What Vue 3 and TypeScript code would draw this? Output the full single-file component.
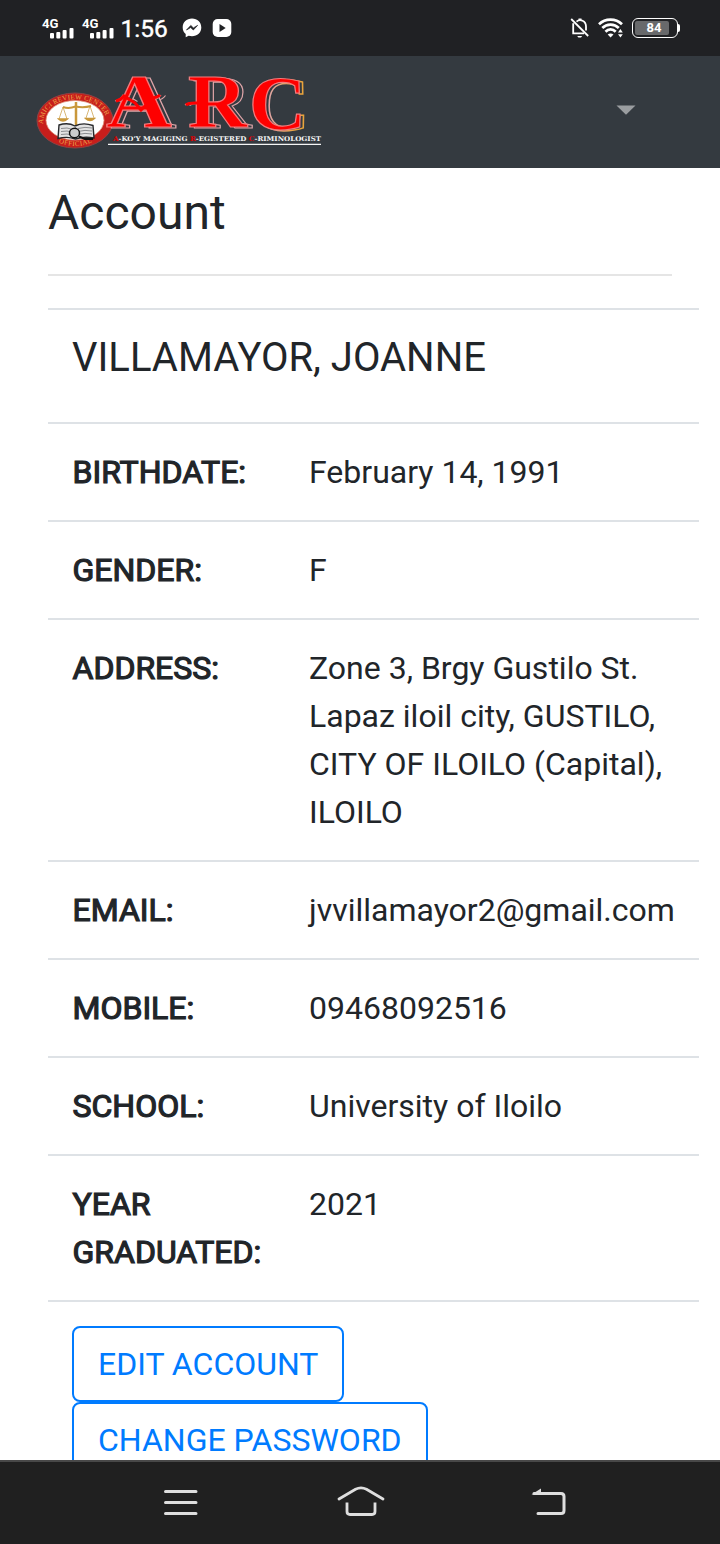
<script setup lang="ts">
interface Field {
  label: string
  value: string
}

const name = 'VILLAMAYOR, JOANNE'
const battery = 84

const fields: Field[] = [
  { label: 'BIRTHDATE:', value: 'February 14, 1991' },
  { label: 'GENDER:', value: 'F' },
  { label: 'ADDRESS:', value: 'Zone 3, Brgy Gustilo St. Lapaz iloil city, GUSTILO, CITY OF ILOILO (Capital), ILOILO' },
  { label: 'EMAIL:', value: 'jvvillamayor2@gmail.com' },
  { label: 'MOBILE:', value: '09468092516' },
  { label: 'SCHOOL:', value: 'University of Iloilo' },
  { label: 'YEAR GRADUATED:', value: '2021' },
]

const signals = [0, 1]
const actions = ['EDIT ACCOUNT', 'CHANGE PASSWORD']
</script>

<template>
  <div class="screen">
    <header class="status">
      <div class="status-left">
        <svg v-for="s in signals" :key="s" class="signal" width="40" height="30" viewBox="0 0 40 30">
          <text x="0" y="15" class="net" textLength="16.500" lengthAdjust="spacingAndGlyphs">4G</text>
          <g fill="#fff">
            <rect x="8" y="20" width="4" height="5.500" rx="1" />
            <rect x="14.300" y="19" width="4" height="6.500" rx="1" />
            <rect x="20.600" y="17" width="4" height="8.500" rx="1" />
            <rect x="27.500" y="15" width="4" height="10.500" rx="1" />
          </g>
        </svg>
        <span class="clock">1:56</span>
        <svg class="messenger" width="20" height="20" viewBox="0 0 20 20">
          <path d="M10 .6C4.500.6.700 4.500.700 9.400c0 2.700 1.100 5 3 6.600v3.300l2.900-1.600c1.100.3 2.200.5 3.400.5 5.400 0 9.300-3.900 9.300-8.800S15.400.6 10 .6z" fill="#fff" />
          <path d="M4.500 12l4.300-4.600 2.600 2.500 4.200-2.500-4.300 4.600-2.600-2.500z" fill="#202124" stroke="#202124" stroke-width=".7" />
        </svg>
        <svg width="20" height="20" viewBox="0 0 20 20">
          <rect x=".7" y="1" width="18.600" height="18" rx="5" fill="#fff" />
          <path d="M7.500 6v8l6.200-4z" fill="#202124" />
        </svg>
      </div>
      <div class="status-right">
        <svg width="20" height="22" viewBox="0 0 20 22" fill="none" stroke="#fff" stroke-width="1.800">
          <path d="M1.200 2l17 17" />
          <path d="M3.200 6.300v10H14" />
          <path d="M6.500 4.600C10 1.400 16 3.800 16 9.500v4" />
          <path d="M7.200 19h5l-1.200 1.600H8.400z" fill="#fff" stroke="none" />
          <path d="M8.500 1.500h3v2h-3z" fill="#fff" stroke="none" />
        </svg>
        <svg class="wifi" width="26" height="22" viewBox="0 0 26 22" fill="none" stroke="#fff" stroke-width="2.700">
          <path d="M1 7.200c6.300-6.200 16.700-6.200 23 0" />
          <path d="M4.300 11c4.500-4.600 12-4.600 16.500 0" />
          <path d="M7.500 14.700c2.900-3 7.300-3 10.200 0" />
          <path d="M9.700 17.600c1.700-1.500 4.100-1.500 5.800 0l-2.900 3z" fill="#fff" stroke="none" />
          <path d="M20 15.400l2.400-3.400 2.400 3.400zM20 17.200h4.800l-2.400 3.400z" fill="#fff" stroke="none" />
        </svg>
        <div class="battery">
          <div class="cell">
            <div class="charge" :style="{ width: battery + '%' }"></div>
            <span class="level">{{ battery }}</span>
          </div>
          <i class="cap"></i>
        </div>
      </div>
    </header>

    <nav class="navbar">
      <svg class="logo" width="296" height="112" viewBox="34 56 296 112">
        <defs>
          <linearGradient id="gold" gradientUnits="userSpaceOnUse" x1="250" y1="0" x2="310" y2="0">
            <stop offset="0.250" stop-color="#dfa5a8" />
            <stop offset="0.700" stop-color="#e8a33c" />
          </linearGradient>
          <path id="seal-top" d="M43.500 127C38 90 112 90 106.500 127" />
          <path id="seal-bottom" d="M54 140Q75 152 96 140" />
          <g id="initials-ar" class="letters">
            <path d="M115 101q5-1 8-6l10 6" />
            <path d="M153 100q5-1 8-5" />
            <path d="M185 105q3-2.500 10-2" />
            <text x="106" y="127" font-size="77" textLength="66" lengthAdjust="spacingAndGlyphs">A</text>
            <text x="188" y="127" font-size="76" textLength="59" lengthAdjust="spacingAndGlyphs">R</text>
          </g>
          <g id="initial-c" class="letters">
            <text x="249" y="129" font-size="77" textLength="57" lengthAdjust="spacingAndGlyphs">C</text>
          </g>
        </defs>
        <ellipse cx="75" cy="120.500" rx="38" ry="27.500" fill="#c71e1b" stroke="#8c4244" stroke-width="1" />
        <ellipse cx="75" cy="120.300" rx="29" ry="19.800" fill="#fff" stroke="#df9279" stroke-width=".8" />
        <text class="seal"><textPath href="#seal-top" startOffset="3" textLength="82">AMICI REVIEW CENTER</textPath></text>
        <text class="seal"><textPath href="#seal-bottom" startOffset="5" textLength="35">OFFICIAL</textPath></text>
        <g fill="none" stroke="#c9983b" stroke-width="1.300">
          <path d="M63 107q6 2 12.500-.5Q84 108 91 106" stroke-width="2" />
          <path d="M76 102v24" stroke-width="2.500" />
          <path d="M63 107l-4 12M63 107l4 12M90 106l-4 12M90 106l4 12" stroke-width=".7" />
          <path d="M58.500 119h9q-4.500 4-9 0zM85.500 118.500h9q-4.500 4-9 0z" fill="#c9983b" />
        </g>
        <path d="M59 125q9-3 16 1 8-4 18-.5l1 12.500q-10-2-18.500 1-8-3-17.500-.500z" fill="#e2e2e2" stroke="#27282b" stroke-width="1.400" />
        <path d="M75.500 126v12M61 128.500q6-1.500 12 1M61 131.500q6-1.500 12 1M61 134.500q6-1.500 12 1M78 128.500q7-2 14-.5M78 131.500q7-2 14-.5M78 134.500q7-2 14-.5" fill="none" stroke="#8a8c8f" />
        <ellipse cx="74.500" cy="133" rx="5" ry="4.700" fill="#ccc" stroke="#111" stroke-width="1.500" />
        <path d="M79 136.500l6 2.500h8" fill="none" stroke="#111" stroke-width="2" />
        <use href="#initials-ar" x="4.500" y=".5" fill="#343a40" stroke="#dfa5a8" stroke-width="1.100" />
        <use href="#initial-c" x="3.500" y=".5" fill="#343a40" stroke="url(#gold)" stroke-width="1.500" />
        <g fill="#fe0000" stroke="#f27b7d" stroke-width="1.200">
          <use href="#initials-ar" />
          <use href="#initial-c" />
        </g>
        <g fill="none" stroke="#fe0000" stroke-width="3">
          <path d="M116 101q5-1 8-5l11 7 6 7 12-12q5-1 7-3" />
          <path d="M186 105q3-2.500 12-2" />
        </g>
        <text x="113" y="140.500" class="motto" textLength="208" lengthAdjust="spacingAndGlyphs"><tspan class="initial">A</tspan>-KO'Y MAGIGING <tspan class="initial">R</tspan>-EGISTERED <tspan class="initial">C</tspan>-RIMINOLOGIST</text>
        <path d="M108 144.300h213" stroke="#f5f5f5" stroke-width="1.200" />
      </svg>
      <svg class="caret" width="20" height="10" viewBox="0 0 20 10"><path d="M.5.500h19L10 9.700z" fill="#9a9da0" /></svg>
    </nav>

    <main class="page">
      <h1>Account</h1>
      <hr />
      <table>
        <colgroup>
          <col class="label-column" />
          <col />
        </colgroup>
        <tbody>
          <tr>
            <td colspan="2"><h2>{{ name }}</h2></td>
          </tr>
          <tr v-for="field in fields" :key="field.label">
            <th>{{ field.label }}</th>
            <td>{{ field.value }}</td>
          </tr>
          <tr>
            <td colspan="2">
              <button v-for="action in actions" :key="action" type="button">{{ action }}</button>
            </td>
          </tr>
        </tbody>
      </table>
    </main>

    <footer class="system-nav">
      <svg width="34" height="28" viewBox="0 0 34 28" stroke="#dedede" stroke-width="3" stroke-linecap="round">
        <path d="M1.500 2.500h30.500M1.500 13.500h30.500M1.500 24.500h30.500" />
      </svg>
      <svg class="home" width="48" height="30" viewBox="0 0 48 30" fill="none" stroke="#dedede" stroke-width="2.800" stroke-linecap="round">
        <path d="M2 13L18.500 3.300q5.500-2.800 11 0L46 13" />
        <path d="M10 16.500v9q0 3 3 3h22q3 0 3-3v-9" stroke-linecap="butt" />
      </svg>
      <svg width="36" height="28" viewBox="0 0 36 28" fill="none" stroke="#dedede" stroke-width="3" stroke-linecap="round">
        <path d="M3 4.500h27q3 0 3 3v14q0 3-3 3H7" />
        <path d="M.5 5.500L10-.5v6z" fill="#dedede" stroke="none" />
      </svg>
    </footer>
  </div>
</template>

<style>
body {
  margin: 0;
}
</style>

<style scoped>
.screen {
  display: flex;
  flex-direction: column;
  width: 720px;
  height: 1544px;
  overflow: hidden;
  background: #fff;
  color: #212529;
  font-family: Roboto, sans-serif;
  font-size: 32px;
  line-height: 48px;
}

svg {
  display: block;
  flex: none;
  overflow: visible;
}

.status {
  display: flex;
  flex: none;
  align-items: center;
  justify-content: space-between;
  box-sizing: border-box;
  height: 56px;
  padding: 0 40px 0 42px;
  background: #202124;
}

.status-left,
.status-right {
  display: flex;
  align-items: center;
}

.status-left {
  gap: 10px;
}

.signal {
  margin-right: -10px;
}

.net {
  fill: #fff;
  font: 700 13.5px Roboto, sans-serif;
}

.clock {
  width: 52px;
  margin: 2px -1px 0 -1.5px;
  color: #fff;
  font-size: 24.5px;
  font-weight: 400;
  -webkit-text-stroke: 0.4px #fff;
}

.wifi {
  margin: 0 8px 0 8px;
}

.battery {
  display: flex;
  align-items: center;
}

.cell {
  position: relative;
  box-sizing: border-box;
  width: 46px;
  height: 20px;
  padding: 2px;
  border: 1.5px solid #fff;
  border-radius: 6px;
}

.charge {
  height: 100%;
  border-radius: 2px;
  background: #68696b;
}

.level {
  position: absolute;
  inset: 0 2px 0 0;
  color: #fff;
  font-size: 13px;
  font-weight: 700;
  line-height: 18px;
  text-align: center;
}

.cap {
  width: 2px;
  height: 8px;
  border-radius: 0 2px 2px 0;
  background: #fff;
}

.navbar {
  display: flex;
  flex: none;
  justify-content: space-between;
  box-sizing: border-box;
  height: 112px;
  padding: 0 84px 0 34px;
  background: #343a40;
}

.caret {
  margin-top: 48.5px;
}

.seal {
  fill: #eda34a;
  font: 400 7px "Liberation Serif", serif;
}

.letters {
  font-family: "Liberation Serif", serif;
  font-weight: 700;
}

.motto {
  fill: #f4f4f4;
  font: 700 6.5px "DejaVu Serif", serif;
}

.initial {
  fill: #e00000;
}

.page {
  flex: 1;
  min-height: 0;
  padding: 16px 48px 0;
  overflow: hidden;
}

h1 {
  margin: 0;
  font-size: 48px;
  font-weight: 400;
  line-height: 58px;
}

hr {
  margin: 32px 0;
  border: 0;
  border-top: 2px solid #e5e5e5;
}

table {
  width: 651px;
  border-spacing: 0;
  table-layout: fixed;
}

.label-column {
  width: 237px;
}

td,
th {
  padding: 24px 20px 24px 24px;
  border-top: 2px solid #dee2e6;
  text-align: left;
  vertical-align: top;
}

th {
  padding-left: 24.5px;
  font-weight: 400;
  -webkit-text-stroke: 1.2px #212529;
}

h2 {
  margin: 0 0 16px;
  font-size: 40px;
  font-weight: 400;
  line-height: 48px;
}

button {
  display: block;
  height: 76px;
  padding: 0 24px;
  border: 2px solid #007bff;
  border-radius: 8px;
  background: #fff;
  color: #007bff;
  font: 400 32px/48px Roboto, sans-serif;
}

.system-nav {
  display: flex;
  flex: none;
  align-items: flex-start;
  justify-content: space-between;
  box-sizing: border-box;
  height: 84px;
  padding: 27px 153px 0 163.5px;
  border-top: 2px solid #484848;
  background: #202020;
}

.home {
  margin: -3px 7px 0 0;
}
</style>
